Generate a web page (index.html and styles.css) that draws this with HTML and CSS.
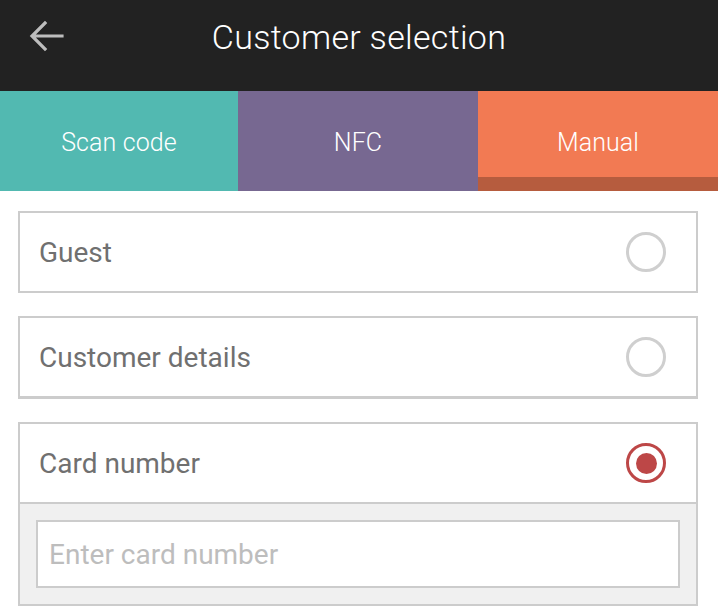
FILE: index.html
```html
<!DOCTYPE html>
<html>
<head>
<meta charset="utf-8">
<link rel="stylesheet" href="styles.css">
</head>
<body>
<div class="app">
  <header class="topbar">
    <button class="back" aria-label="Back">
      <svg width="36" height="36" viewBox="0 0 36 36"><path d="M34 18H6M17 5L4 18l13 13" fill="none" stroke="#bdbdbd" stroke-width="3.2" stroke-linecap="square"/></svg>
    </button>
    <h1 class="title">Customer selection</h1>
  </header>
  <nav class="tabs">
    <div class="tab tab-scan">Scan code</div>
    <div class="tab tab-nfc">NFC</div>
    <div class="tab tab-manual active">Manual</div>
  </nav>
  <main class="list">
    <div class="card">
      <div class="row"><span class="label">Guest</span><span class="radio"></span></div>
    </div>
    <div class="card card-shadow">
      <div class="row"><span class="label">Customer details</span><span class="radio"></span></div>
    </div>
    <div class="card">
      <div class="row"><span class="label">Card number</span><span class="radio checked"></span></div>
      <div class="extra">
        <input class="input" type="text" placeholder="Enter card number">
      </div>
    </div>
  </main>
</div>
</body>
</html>
```

FILE: styles.css
```css
* { box-sizing: border-box; }
html, body { margin: 0; padding: 0; background: #fff; }
body { font-family: Roboto, "Noto Sans", sans-serif; }
.app { width: 718px; height: 608px; overflow: hidden; }

.topbar {
  height: 91px;
  background: #222222;
  display: flex;
  align-items: center;
  justify-content: center;
  position: relative;
}
.back {
  position: absolute;
  left: 28px;
  top: 18px;
  width: 36px;
  height: 36px;
  padding: 0;
  border: 0;
  background: none;
}
.back svg { display: block; }
.title {
  margin: 0 0 18px 0;
  font-weight: 300;
  font-size: 34px;
  color: #ffffff;
  letter-spacing: 0.3px;
}

.tabs {
  display: grid;
  grid-template-columns: 238px 240px 240px;
  height: 100px;
}
.tab {
  display: flex;
  align-items: center;
  justify-content: center;
  color: #fff;
  font-size: 25px;
  font-weight: 300;
  padding-top: 2px;
  letter-spacing: 0.1px;
}
.tab-scan { background: #52b9b1; }
.tab-nfc { background: #776891; }
.tab-manual { background: #f27a53; box-shadow: inset 0 -14px 0 #b65c3e; }

.list {
  padding: 20px 20px 0 18px;
  display: flex;
  flex-direction: column;
  gap: 23px;
}
.card {
  border: 2px solid #cccccc;
  background: #fff;
}
.card-shadow { border-bottom-width: 3px; }
.row {
  height: 78px;
  display: flex;
  align-items: center;
  justify-content: space-between;
  padding: 0 30px 0 19px;
}
.label {
  font-size: 28px;
  color: #707070;
  padding-top: 1px;
}
.radio {
  width: 40px;
  height: 40px;
  border-radius: 50%;
  border: 3.5px solid #cfcfcf;
  position: relative;
}
.radio.checked { border-color: #bd4747; }
.radio.checked::after {
  content: "";
  position: absolute;
  left: 50%;
  top: 50%;
  width: 21px;
  height: 21px;
  margin: -10.5px 0 0 -10.5px;
  border-radius: 50%;
  background: #bd4747;
}
.extra {
  border-top: 2px solid #cccccc;
  background: #f0f0f0;
  padding: 16px;
}
.input {
  display: block;
  width: 100%;
  height: 68px;
  border: 2px solid #cccccc;
  background: #fff;
  font-family: Roboto, "Noto Sans", sans-serif;
  font-size: 28px;
  padding: 1px 11px 0;
  color: #555;
  outline: none;
}
.input::placeholder { color: #bdbdbd; }
```
